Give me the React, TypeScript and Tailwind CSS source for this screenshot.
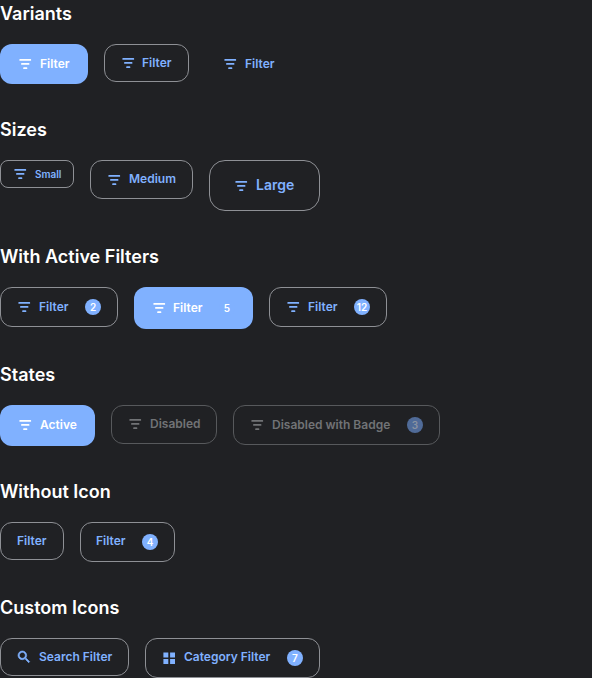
import type { ReactNode } from "react";

function FilterIcon() {
  return (
    <svg className="h-4 w-4 shrink-0" viewBox="0 0 16 16" fill="currentColor">
      <rect x="2.4" y="3" width="11.7" height="1.7" rx="0.5" />
      <rect x="4.1" y="7.1" width="8.3" height="1.7" rx="0.5" />
      <rect x="6.2" y="11.3" width="4.1" height="1.7" rx="0.6" />
    </svg>
  );
}

function SearchIcon() {
  return (
    <svg className="h-4 w-4 shrink-0" viewBox="0 0 24 24" fill="currentColor" stroke="currentColor" strokeWidth="0.9">
      <path d="M15.5 14h-.79l-.28-.27A6.471 6.471 0 0 0 16 9.5 6.5 6.5 0 1 0 9.5 16c1.61 0 3.09-.59 4.23-1.57l.27.28v.79l5 4.99L20.49 19l-4.99-5zm-6 0C7.01 14 5 11.99 5 9.5S7.01 5 9.5 5 14 7.01 14 9.5 11.99 14 9.5 14z" />
    </svg>
  );
}

function GridIcon() {
  return (
    <svg className="h-4 w-4 shrink-0" viewBox="0 0 16 16" fill="currentColor">
      <path d="M2.4 2.6h4.9v4.9H2.4zM9.1 2.6H14v4.9H9.1zM2.4 9h4.9v4.9H2.4zM9.1 9H14v4.9H9.1z" />
    </svg>
  );
}

const variants = {
  filled: "bg-[#80b1ff] text-white",
  outline: "border border-[#8e9095] text-[#80b1ff]",
  text: "text-[#80b1ff]",
  disabled: "border border-[#57595c] text-[#717376]",
};

type ButtonProps = {
  label: string;
  variant?: keyof typeof variants;
  box: string;
  labelClass?: string;
  iconClass?: string;
  icon?: ReactNode;
  badge?: string;
  badgeClass?: string;
};

function FilterButton({
  label,
  variant = "outline",
  box,
  labelClass = "text-xs",
  iconClass = "mr-[7px]",
  icon = <FilterIcon />,
  badge,
  badgeClass = "bg-[#80b1ff] text-white",
}: ButtonProps) {
  return (
    <button className={`flex shrink-0 items-center font-semibold whitespace-nowrap ${variants[variant]} ${box}`}>
      {icon && <span className={iconClass}>{icon}</span>}
      <span className={labelClass}>{label}</span>
      {badge && (
        <span className={`ml-auto flex h-4 w-4 items-center justify-center rounded-full text-[10px] leading-4 ${badgeClass}`}>
          {badge}
        </span>
      )}
    </button>
  );
}

function Section({ title, height, children }: { title: string; height: string; children: ReactNode }) {
  return (
    <section>
      <h3 className="mb-4 text-lg leading-7 font-semibold text-white">{title}</h3>
      <div className={`flex items-start gap-4 ${height}`}>{children}</div>
    </section>
  );
}

export default function App() {
  return (
    <main className="flex h-[678px] w-[592px] flex-col gap-8 overflow-hidden bg-[#202124] font-['Inter',sans-serif]">
      <Section title="Variants" height="h-10">
        <FilterButton label="Filter" variant="filled" box="h-10 w-[88px] rounded-xl pl-[17px]" />
        <FilterButton label="Filter" box="h-[38px] w-[85px] rounded-xl pl-[15px]" iconClass="mr-1.5" />
        <FilterButton label="Filter" variant="text" box="h-10 w-[88px] rounded-xl pl-[17px]" />
      </Section>
      <Section title="Sizes" height="h-[51px]">
        <FilterButton label="Small" box="h-7 w-[74px] rounded-lg pl-[11px]" labelClass="text-[10px]" />
        <FilterButton label="Medium" box="h-[39px] w-[103px] rounded-xl pl-[15px]" labelClass="pb-0.5 text-xs" />
        <FilterButton label="Large" box="h-[51px] w-[111px] rounded-2xl pl-[23px]" labelClass="pb-0.5 text-sm" />
      </Section>
      <Section title="With Active Filters" height="h-[42px]">
        <FilterButton label="Filter" badge="2" box="h-10 w-[118px] rounded-xl pr-4 pl-[15px]" />
        <FilterButton
          label="Filter"
          badge="5"
          variant="filled"
          box="h-[42px] w-[119px] rounded-xl pr-[18px] pl-[17px]"
          iconClass="mr-1.5"
        />
        <FilterButton label="Filter" badge="12" box="h-10 w-[118px] rounded-xl pr-4 pl-[15px]" />
      </Section>
      <Section title="States" height="h-[41px]">
        <FilterButton label="Active" variant="filled" box="h-[41px] w-[95px] rounded-xl pb-px pl-[17px]" />
        <FilterButton label="Disabled" variant="disabled" box="h-[39px] w-[106px] rounded-xl pb-px pl-[15px]" />
        <FilterButton
          label="Disabled with Badge"
          variant="disabled"
          badge="3"
          badgeClass="bg-[#506b98] text-[#8b93a1]"
          box="h-10 w-[207px] rounded-xl pr-4 pl-[15px]"
        />
      </Section>
      <Section title="Without Icon" height="h-10">
        <FilterButton label="Filter" icon={null} box="h-[38px] w-16 rounded-xl pl-4" />
        <FilterButton label="Filter" icon={null} badge="4" box="h-10 w-[95px] rounded-xl pr-4 pl-[15px]" labelClass="pb-0.5 text-xs" />
      </Section>
      <Section title="Custom Icons" height="h-10">
        <FilterButton label="Search Filter" icon={<SearchIcon />} box="h-[38px] w-[129px] rounded-xl pl-[15px]" />
        <FilterButton label="Category Filter" icon={<GridIcon />} badge="7" box="h-10 w-[175px] rounded-xl pr-4 pl-[15px]" labelClass="pb-0.5 text-xs" />
      </Section>
    </main>
  );
}
